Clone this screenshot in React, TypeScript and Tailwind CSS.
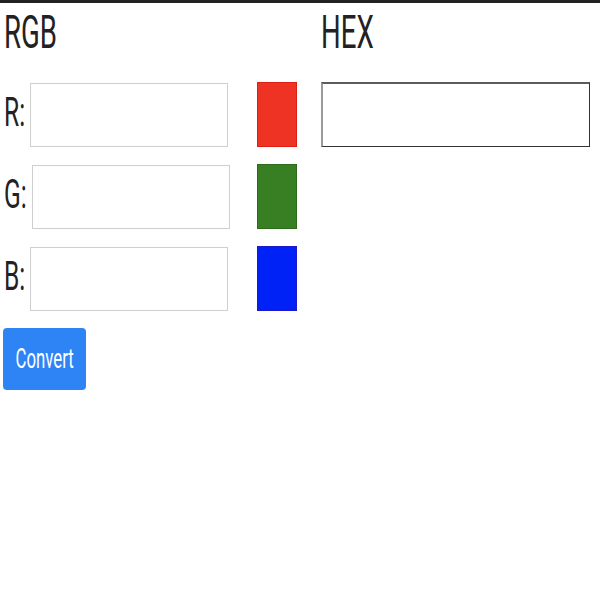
import React from "react";

const rows = [
  { label: "R:", labelClass: "w-[26px]", swatch: "bg-[#ee3325] border-[#dd1f17]" },
  { label: "G:", labelClass: "w-[28px]", swatch: "bg-[#387e22] border-[#2a6a18]" },
  { label: "B:", labelClass: "w-[26px]", swatch: "bg-[#0022f6] border-[#1a1acc]" },
];

export default function App() {
  return (
    <div className="w-[600px] h-[600px] bg-white border-t-[3px] border-[#222] font-['Roboto',sans-serif] text-[#222]">
      <div className="flex pt-[6px]">
        {/* RGB column */}
        <div className="w-[321px] pl-[4px]">
          <h1 className="text-[46px] leading-[46px] h-[46px] font-normal">
            <span className="inline-block scale-x-[0.6] origin-left">RGB</span>
          </h1>

          <div className="mt-[27px] flex flex-col gap-[17px]">
            {rows.map((row) => (
              <div key={row.label} className="flex h-[65px]">
                <div className="w-[253px] flex">
                  <div className={`${row.labelClass} text-[41px] leading-[61px] whitespace-nowrap`}>
                    <span className="inline-block scale-x-[0.6] origin-left">{row.label}</span>
                  </div>
                  <input
                    type="text"
                    className="mt-[1px] w-[198px] h-[64px] border border-[#cfcfcf] bg-white outline-none"
                  />
                </div>
                <div className={`w-[40px] h-[65px] border ${row.swatch}`} />
              </div>
            ))}
          </div>

          <button className="mt-[17px] -ml-[1px] w-[83px] h-[62px] rounded-[4px] bg-[#2f84f5] text-white text-[28px] leading-[62px] flex items-center justify-center">
            <span className="inline-block shrink-0 scale-x-[0.6]">Convert</span>
          </button>
        </div>

        {/* HEX column */}
        <div className="flex-1">
          <h1 className="text-[46px] leading-[46px] h-[46px] font-normal">
            <span className="inline-block scale-x-[0.6] origin-left">HEX</span>
          </h1>
          <input
            type="text"
            className="mt-[27px] w-[269px] h-[65px] border-t-2 border-l-2 border-r border-b border-t-[#5c5c5c] border-l-[#9a9a9a] border-r-[#333] border-b-[#333] bg-white outline-none"
          />
        </div>
      </div>
    </div>
  );
}
